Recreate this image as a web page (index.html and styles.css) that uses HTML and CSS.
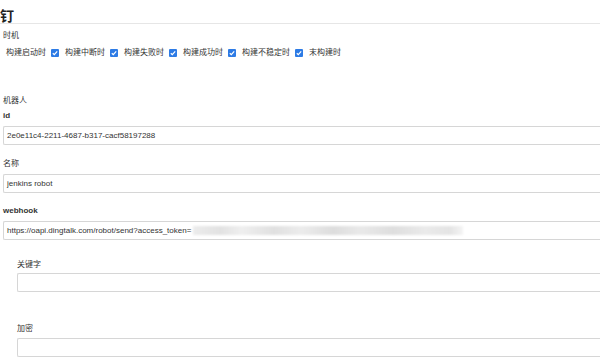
FILE: index.html
```html
<!DOCTYPE html>
<html lang="zh">
<head>
<meta charset="utf-8">
<title>钉钉</title>
<link rel="stylesheet" href="styles.css">
</head>
<body>
<div class="page">
  <div class="title">钉</div>
  <div class="trigger">时机</div>
  <div class="checks">
    <label class="check"><span>构建启动时</span><span class="cb"><svg viewBox="0 0 8 8"><path d="M1.8 4.2 L3.3 5.6 L6.2 2.4" fill="none" stroke="#fff" stroke-width="1.2"/></svg></span></label>
    <label class="check"><span>构建中断时</span><span class="cb"><svg viewBox="0 0 8 8"><path d="M1.8 4.2 L3.3 5.6 L6.2 2.4" fill="none" stroke="#fff" stroke-width="1.2"/></svg></span></label>
    <label class="check"><span>构建失败时</span><span class="cb"><svg viewBox="0 0 8 8"><path d="M1.8 4.2 L3.3 5.6 L6.2 2.4" fill="none" stroke="#fff" stroke-width="1.2"/></svg></span></label>
    <label class="check"><span>构建成功时</span><span class="cb"><svg viewBox="0 0 8 8"><path d="M1.8 4.2 L3.3 5.6 L6.2 2.4" fill="none" stroke="#fff" stroke-width="1.2"/></svg></span></label>
    <label class="check"><span>构建不稳定时</span><span class="cb"><svg viewBox="0 0 8 8"><path d="M1.8 4.2 L3.3 5.6 L6.2 2.4" fill="none" stroke="#fff" stroke-width="1.2"/></svg></span></label>
    <label class="check"><span>末构建时</span></label>
  </div>

  <div class="robot">
    <div class="section">机器人</div>
    <div class="label bold l-id">id</div>
    <div class="input">2e0e11c4-2211-4687-b317-cacf58197288</div>
    <div class="label l-name">名称</div>
    <div class="input">jenkins robot</div>
    <div class="label bold l-hook">webhook</div>
    <div class="input">https://oapi.dingtalk.com/robot/send?access_token=<span class="blur"></span></div>
    <div class="sub">
      <div class="label l-key">关键字</div>
      <div class="input empty"></div>
      <div class="label l-secret">加密</div>
      <div class="input empty"></div>
    </div>
  </div>
</div>
</body>
</html>
```

FILE: styles.css
```css
html, body {
  margin: 0;
  padding: 0;
  background: #fff;
  overflow: hidden;
}
.page {
  width: 600px;
  font-family: "Liberation Sans", "Noto Sans CJK SC", sans-serif;
  font-size: 8px;
  line-height: 12px;
  color: #333;
}
.title {
  font-family: "Noto Sans CJK SC", sans-serif;
  font-size: 14px;
  font-weight: bold;
  line-height: 16px;
  padding-top: 7px;
  border-bottom: 1px solid #e6e6e6;
  color: #222;
}
.trigger {
  margin-top: 6px;
  padding-left: 3px;
}
.checks {
  display: flex;
  align-items: center;
  gap: 6px;
  margin-top: 5px;
  padding-left: 6px;
}
.check {
  display: flex;
  align-items: center;
  gap: 5px;
}
.cb {
  display: inline-block;
  width: 8px;
  height: 8px;
  background: #2d7be5;
  border-radius: 1px;
}
.cb svg {
  display: block;
  width: 8px;
  height: 8px;
}
.robot {
  padding-left: 3px;
  margin-top: 36px;
}
.section {
  margin-bottom: 3px;
}
.label {
  margin-bottom: 4px;
}
.bold {
  font-weight: bold;
}
.l-name { margin-top: 13px; }
.l-hook { margin-top: 12px; }
.sub {
  padding-left: 14px;
}
.l-key { margin-top: 19px; margin-bottom: 2px; }
.l-secret { margin-top: 31px; margin-bottom: 3px; }
.input {
  box-sizing: border-box;
  height: 19px;
  border: 1px solid #d6d6d6;
  border-right: none;
  border-radius: 2px 0 0 2px;
  padding: 0 3px;
  line-height: 17px;
  color: #333;
  white-space: nowrap;
  overflow: hidden;
}
.blur {
  display: inline-block;
  vertical-align: middle;
  width: 270px;
  height: 9px;
  margin-left: 2px;
  background: linear-gradient(90deg, #ececec 0%, #e2e2e2 10%, #efefef 18%, #e0e0e0 30%, #ececec 40%, #dddddd 52%, #e9e9e9 62%, #dedede 74%, #eaeaea 86%, #e4e4e4 95%, #f4f4f4 100%);
  filter: blur(1.2px);
}
```
